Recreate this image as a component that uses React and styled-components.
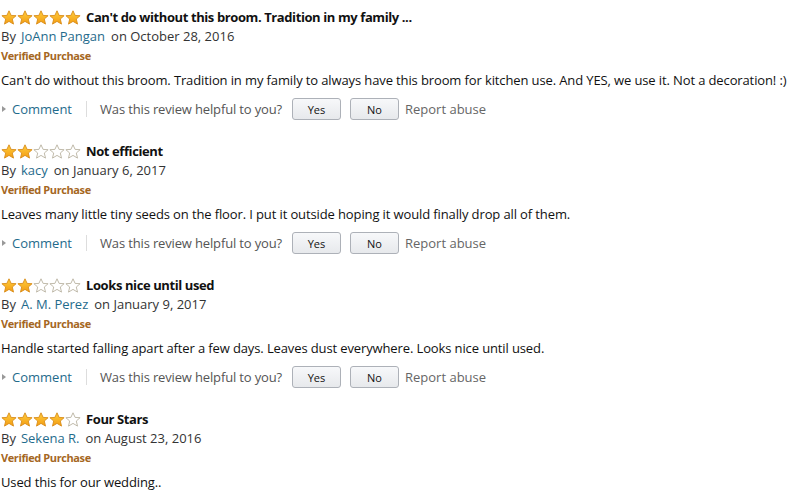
import styled, { createGlobalStyle } from "styled-components";

const GlobalStyle = createGlobalStyle`
  html, body {
    margin: 0;
    background: #fff;
    overflow: hidden;
  }
  body {
    font-family: "Open Sans", "Noto Sans", sans-serif;
    color: #111;
  }
`;

const reviews = [
  {
    stars: 5,
    title: "Can't do without this broom. Tradition in my family ...",
    author: "JoAnn Pangan",
    date: "October 28, 2016",
    body: "Can't do without this broom. Tradition in my family to always have this broom for kitchen use. And YES, we use it. Not a decoration! :)",
    actions: true,
  },
  {
    stars: 2,
    title: "Not efficient",
    author: "kacy",
    date: "January 6, 2017",
    body: "Leaves many little tiny seeds on the floor. I put it outside hoping it would finally drop all of them.",
    actions: true,
  },
  {
    stars: 2,
    title: "Looks nice until used",
    author: "A. M. Perez",
    date: "January 9, 2017",
    body: "Handle started falling apart after a few days. Leaves dust everywhere. Looks nice until used.",
    actions: true,
  },
  {
    stars: 4,
    title: "Four Stars",
    author: "Sekena R.",
    date: "August 23, 2016",
    body: "Used this for our wedding..",
    actions: false,
  },
];

const Page = styled.div`
  padding: 9px 0 0 1px;
`;

const Review = styled.section`
  height: 134px;
  display: flex;
  flex-direction: column;
  &:last-child {
    height: auto;
  }
`;

const TitleRow = styled.div`
  display: flex;
  align-items: center;
  height: 16px;
  gap: 5px;
`;

const Stars = styled.div`
  display: flex;
`;

const Title = styled.h3`
  margin: 0;
  font-size: 13px;
  font-weight: 700;
  letter-spacing: -0.4px;
  color: #111;
  line-height: 16px;
  white-space: nowrap;
`;

const ByLine = styled.div`
  margin-top: 2px;
  font-size: 13px;
  line-height: 18px;
  color: #333;
`;

const Author = styled.a`
  color: #1f6b8c;
  text-decoration: none;
  margin: 0 6px 0 5px;
`;

const Verified = styled.div`
  margin-top: 3px;
  font-size: 11px;
  letter-spacing: -0.4px;
  line-height: 16px;
  font-weight: 700;
  color: #a5671f;
`;

const Body = styled.p`
  margin: 7px 0 0;
  font-size: 13px;
  line-height: 18px;
  letter-spacing: -0.12px;
  white-space: nowrap;
  color: #111;
`;

const Actions = styled.div`
  margin-top: 9px;
  display: flex;
  align-items: center;
  height: 22px;
  font-size: 13px;
  color: #555;
`;

const CommentLink = styled.a`
  display: flex;
  align-items: center;
  color: #1f6b8c;
  text-decoration: none;
  &::before {
    content: "";
    border-left: 4px solid #999;
    border-top: 3px solid transparent;
    border-bottom: 3px solid transparent;
    margin: 0 6px 0 1px;
  }
`;

const Divider = styled.span`
  width: 1px;
  height: 16px;
  background: #ddd;
  margin: 0 13px 0 14px;
`;

const Question = styled.span`
  letter-spacing: -0.15px;
`;

const VoteButton = styled.button`
  font-family: inherit;
  font-size: 11px;
  color: #111;
  width: 49px;
  height: 22px;
  margin-left: ${(p) => p.$gap}px;
  border: 1px solid #adb1b8;
  border-radius: 3px;
  background: linear-gradient(#f7f8fa, #e7e9ec);
  padding: 0;
`;

const Report = styled.span`
  margin-left: 6px;
  color: #666;
`;

const Star = ({ filled }) => (
  <svg width="16" height="15" viewBox="0 0 16 15">
    <defs>
      <linearGradient id="sg" x1="0" y1="0" x2="0" y2="1">
        <stop offset="0" stopColor="#ffce3d" />
        <stop offset="1" stopColor="#f39c12" />
      </linearGradient>
    </defs>
    <path
      d="M8 0.8 L10.1 5.4 L15.1 5.7 L11.3 9 L12.5 14.1 L8 11.4 L3.5 14.1 L4.7 9 L0.9 5.7 L5.9 5.4 Z"
      fill={filled ? "url(#sg)" : "#fff"}
      stroke={filled ? "#d88c1a" : "#b9b2a0"}
      strokeWidth="0.9"
      strokeLinejoin="round"
    />
  </svg>
);

export default function App() {
  return (
    <>
      <GlobalStyle />
      <Page>
        {reviews.map((r, i) => (
          <Review key={i}>
            <TitleRow>
              <Stars>
                {[0, 1, 2, 3, 4].map((n) => (
                  <Star key={n} filled={n < r.stars} />
                ))}
              </Stars>
              <Title>{r.title}</Title>
            </TitleRow>
            <ByLine>
              By<Author href="#">{r.author}</Author>on {r.date}
            </ByLine>
            <Verified>Verified Purchase</Verified>
            <Body>{r.body}</Body>
            {r.actions && (
              <Actions>
                <CommentLink href="#">Comment</CommentLink>
                <Divider />
                <Question>Was this review helpful to you?</Question>
                <VoteButton $gap={10}>Yes</VoteButton>
                <VoteButton $gap={9}>No</VoteButton>
                <Report>Report abuse</Report>
              </Actions>
            )}
          </Review>
        ))}
      </Page>
    </>
  );
}
